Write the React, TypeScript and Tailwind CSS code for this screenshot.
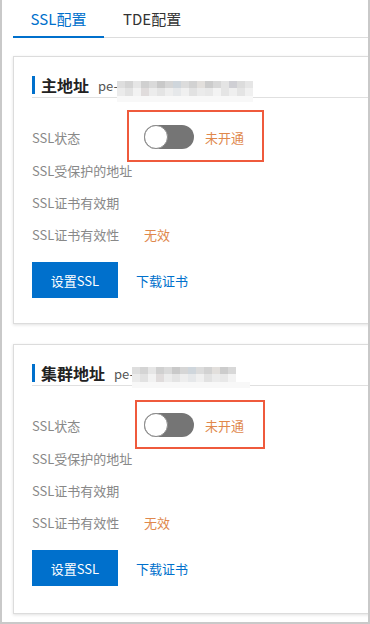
import React from "react";

const mosaicRow1 = [
  "bg-[#dedede]", "bg-[#d4d4d4]", "bg-[#e6e6e6]", "bg-[#d0d0d0]", "bg-[#dadada]",
  "bg-[#c9c9c9]", "bg-[#d6d6d6]", "bg-[#cfd6dc]", "bg-[#dcdcdc]", "bg-[#d2d2d2]",
  "bg-[#e2dfdc]", "bg-[#cccccc]", "bg-[#d8d8d8]", "bg-[#e4e4e4]", "bg-[#cfcfd4]",
  "bg-[#dcdcdc]", "bg-[#e6e6e6]",
];
const mosaicRow2 = [
  "bg-[#ebebeb]", "bg-[#e2e2e2]", "bg-[#f2f2f2]", "bg-[#e0dcdc]", "bg-[#ececec]",
  "bg-[#e4e4e4]", "bg-[#eeeeee]", "bg-[#e6e8ea]", "bg-[#f0f0f0]", "bg-[#e2e2e2]",
  "bg-[#ebebeb]", "bg-[#e8e8e8]", "bg-[#f3f3f3]", "bg-[#e5e5e5]", "bg-[#efefef]",
  "bg-[#e4e4e4]", "bg-[#f0f0f0]",
];

function Mosaic({ className, cols, stripClass }: { className: string; cols: number; stripClass: string }) {
  return (
    <div className={"absolute flex flex-col " + className}>
      <div className="flex h-[7px]">
        {mosaicRow1.slice(0, cols).map((c, i) => (
          <div key={i} className={"w-[8px] h-full " + c} />
        ))}
      </div>
      <div className="flex h-[8px]">
        {mosaicRow2.slice(0, cols).map((c, i) => (
          <div key={i} className={"w-[8px] h-full " + c} />
        ))}
      </div>
      <div className={"h-[6px] bg-[#f8f8f8] " + stripClass} />
    </div>
  );
}

function Toggle() {
  return (
    <div className="relative w-[50px] h-[24px] rounded-full bg-[#757575]">
      <div className="absolute left-0 top-0 w-[24px] h-[24px] rounded-full bg-white border border-[#8a8a8a]" />
    </div>
  );
}

function Card({
  title,
  mosaicClass,
  cols,
  stripClass,
  redClass,
  pbClass,
}: {
  title: string;
  mosaicClass: string;
  cols: number;
  stripClass: string;
  redClass: string;
  pbClass: string;
}) {
  return (
    <div className={"ml-[11px] mr-[-20px] border border-[#dcdcdc] bg-white shadow-[0_1px_3px_rgba(0,0,0,0.12)] pt-[16px] pl-[18px] " + pbClass}>
      <div className="relative flex items-center h-[25px] border-b border-[#e0e0e0]">
        <div className="w-[3px] h-[18px] bg-[#0070cc]" />
        <span className="ml-[6px] text-[16px] leading-none font-semibold text-[#222]">{title}</span>
        <span className="ml-[9px] text-[13px] leading-none text-[#555]">pe-</span>
        <Mosaic className={mosaicClass} cols={cols} stripClass={stripClass} />
      </div>
      <div className="mt-[22px] text-[13px] leading-none">
        <div className="flex items-center h-[34px]">
          <div className="w-[112px] text-[#888]">SSL状态</div>
          <div className="relative flex items-center">
            <div className={"absolute border-2 border-[#ef5a3c] " + redClass} />
            <Toggle />
            <span className="ml-[11px] text-[#e0884c]">未开通</span>
          </div>
        </div>
        <div className="flex items-center h-[32px]">
          <div className="w-[112px] text-[#888]">SSL受保护的地址</div>
        </div>
        <div className="flex items-center h-[32px]">
          <div className="w-[112px] text-[#888]">SSL证书有效期</div>
        </div>
        <div className="flex items-center h-[32px]">
          <div className="w-[112px] text-[#888]">SSL证书有效性</div>
          <span className="text-[#e0884c]">无效</span>
        </div>
      </div>
      <div className="mt-[12px] flex items-center">
        <div className="w-[86px] h-[36px] bg-[#0070cc] text-white text-[13px] leading-none flex items-center justify-center">
          设置SSL
        </div>
        <span className="ml-[18px] text-[13px] leading-none text-[#0070cc]">下载证书</span>
      </div>
    </div>
  );
}

export default function App() {
  return (
    <div
      className="w-[370px] h-[624px] overflow-hidden bg-white border-l-2 border-r-2 border-b-2 border-[#c9c9c9] box-border"
      style={{ fontFamily: '"Noto Sans CJK SC", "Noto Sans", sans-serif' }}
    >
      <div className="ml-[11px] flex border-b border-[#dddddd]">
        <div className="relative h-[37px] w-[91px] flex items-center justify-center text-[15px] leading-none text-[#0070cc]">
          SSL配置
          <div className="absolute left-0 right-0 bottom-[-1px] h-[2px] bg-[#0070cc]" />
        </div>
        <div className="h-[37px] pl-[19px] flex items-center text-[15px] leading-none text-[#333]">
          TDE配置
        </div>
      </div>
      <div className="mt-[18px]">
        <Card
          title="主地址"
          mosaicClass="left-[85px] top-[8px]"
          cols={17}
          stripClass="w-[136px]"
          redClass="left-[-17px] top-[-15px] w-[137px] h-[52px]"
          pbClass="pb-[25px]"
        />
      </div>
      <div className="mt-[20px]">
        <Card
          title="集群地址"
          mosaicClass="left-[100px] top-[6px]"
          cols={13}
          stripClass="w-[118px]"
          redClass="left-[-9px] top-[-13px] w-[130px] h-[49px]"
          pbClass="pb-[27px]"
        />
      </div>
    </div>
  );
}
